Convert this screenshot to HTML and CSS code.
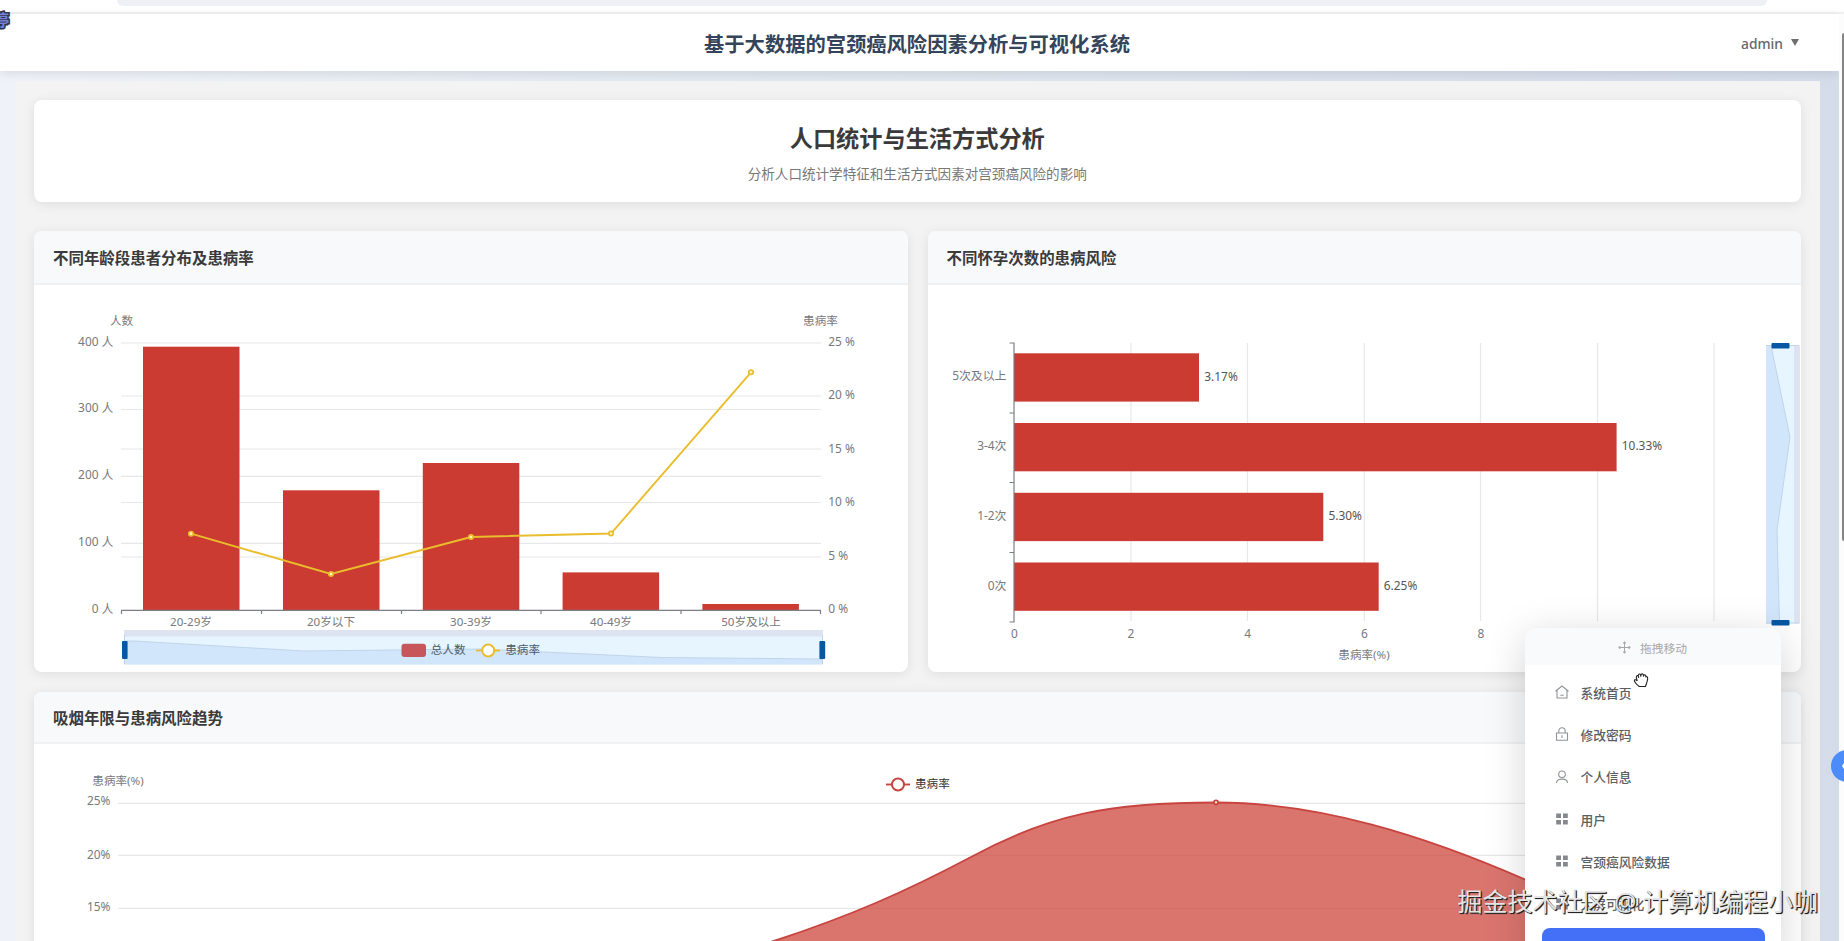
FILE: index.html
```html
<!DOCTYPE html>
<html lang="zh-CN">

<head>
    <meta charset="UTF-8">
    <meta name="viewport" content="width=device-width, initial-scale=1.0">
    <title>基于大数据的宫颈癌风险因素分析与可视化系统</title>
    <link rel="stylesheet" href="styles.css">
</head>

<body>
    <div class="browser-bar">
        <div class="address"></div>
    </div>

    <header class="header">
        <h1>基于大数据的宫颈癌风险因素分析与可视化系统</h1>
        <div class="user">admin <span class="caret"></span></div>
    </header>

    <main class="main">
        <div class="content">
            <section class="card intro">
                <h2>人口统计与生活方式分析</h2>
                <p>分析人口统计学特征和生活方式因素对宫颈癌风险的影响</p>
            </section>

            <div class="row">
                <!-- Age distribution -->
                <section class="card">
                    <div class="card-title">不同年龄段患者分布及患病率</div>
                    <svg class="chart" width="874" height="387" viewBox="34 285 874 387">
                        <g class="grid">
                            <path d="M121 343H821M121 396H821M121 409.5H821M121 449H821M121 476.300H821M121 502.500H821M121 543.400H821M121 557H821" />
                        </g>
                        <g class="bar">
                            <rect x="143" y="346.7" width="96.5" height="263.3" />
                            <rect x="283" y="490.3" width="96.5" height="119.7" />
                            <rect x="422.8" y="463" width="96.5" height="147" />
                            <rect x="562.6" y="572.4" width="96.5" height="37.6" />
                            <rect x="702.4" y="604" width="96.5" height="6" />
                        </g>
                        <path class="axis" d="M121.500 614V610.300H820.500V614M261.500 610V614M401.500 610V614M541 610V614M681 610V614" />
                        <polyline class="line yellow" points="191,533.7 331,574 471,537 611,533.5 751,372.3" />
                        <g class="dot yellow">
                            <circle cx="191" cy="533.7" r="2.2" />
                            <circle cx="331" cy="574" r="2.2" />
                            <circle cx="471" cy="537" r="2.2" />
                            <circle cx="611" cy="533.5" r="2.2" />
                            <circle cx="751" cy="372.3" r="2.2" />
                        </g>
                        <g class="label num end">
                            <text x="113.5" y="345.5">400 人</text>
                            <text x="113.5" y="412.2">300 人</text>
                            <text x="113.5" y="479">200 人</text>
                            <text x="113.5" y="545.7">100 人</text>
                            <text x="113.5" y="612.7">0 人</text>
                        </g>
                        <g class="label num">
                            <text x="828.3" y="345.7">25 %</text>
                            <text x="828.3" y="398.9">20 %</text>
                            <text x="828.3" y="453">15 %</text>
                            <text x="828.3" y="506">10 %</text>
                            <text x="828.3" y="559.5">5 %</text>
                            <text x="828.3" y="612.6">0 %</text>
                        </g>
                        <g class="label middle">
                            <text x="121.5" y="325">人数</text>
                            <text x="820.5" y="325">患病率</text>
                            <text x="191" y="626">20-29岁</text>
                            <text x="331" y="626">20岁以下</text>
                            <text x="471" y="626">30-39岁</text>
                            <text x="611" y="626">40-49岁</text>
                            <text x="751" y="626">50岁及以上</text>
                        </g>

                        <!-- data zoom -->
                        <rect class="zoom-move" x="124" y="630" width="699" height="7" />
                        <rect class="zoom-bg" x="124" y="636.5" width="699" height="28" />
                        <path class="zoom-area" d="M124 664.5V641H134L304 651L480 649L662 657.5L823 659V664.5Z" />
                        <path class="zoom-line" d="M124.5 641H134L304 651L480 649L662 657.5L823 659" />
                        <path class="zoom-edge" d="M124.5 635V664M822.5 635V664" />
                        <rect class="handle" x="122" y="641" width="5.6" height="18" rx="1" />
                        <rect class="handle" x="819.4" y="641" width="5.8" height="18" rx="1" />

                        <rect class="legend-bar" x="401.5" y="643.7" width="24.5" height="13.4" rx="3" />
                        <text class="legend soft" x="430.7" y="654">总人数</text>
                        <path class="line yellow" d="M476 650.5H500" />
                        <circle class="ring yellow" cx="488.2" cy="650.5" r="6" />
                        <text class="legend soft" x="505.2" y="654">患病率</text>
                    </svg>
                </section>

                <!-- Pregnancy count -->
                <section class="card">
                    <div class="card-title">不同怀孕次数的患病风险</div>
                    <svg class="chart" width="873" height="387" viewBox="928 285 873 387">
                        <g class="grid">
                            <path d="M1131 343V621M1247.5 343V621M1364.3 343V621M1480.5 343V621M1597.5 343V621M1714 343V621" />
                        </g>
                        <g class="bar">
                            <rect x="1014" y="353.3" width="185" height="48.3" />
                            <rect x="1014" y="423" width="602.6" height="48.3" />
                            <rect x="1014" y="492.8" width="309.3" height="48.3" />
                            <rect x="1014" y="562.5" width="364.7" height="48.3" />
                        </g>
                        <path class="axis" d="M1009.5 343H1014V622H1009.5M1009.5 413H1014M1009.5 482.5H1014M1009.5 552.5H1014" />
                        <g class="label num end">
                            <text x="1006.5" y="380">5次及以上</text>
                            <text x="1006.5" y="450">3-4次</text>
                            <text x="1006.5" y="519.7">1-2次</text>
                            <text x="1006.5" y="589.5">0次</text>
                        </g>
                        <g class="legend num">
                            <text x="1204.3" y="380.5">3.17%</text>
                            <text x="1621.8" y="450.2">10.33%</text>
                            <text x="1328.4" y="520">5.30%</text>
                            <text x="1383.8" y="589.7">6.25%</text>
                        </g>
                        <g class="label num middle">
                            <text x="1014.3" y="638">0</text>
                            <text x="1131" y="638">2</text>
                            <text x="1247.7" y="638">4</text>
                            <text x="1364.3" y="638">6</text>
                            <text x="1480.8" y="638">8</text>
                        </g>
                        <text class="label middle" x="1364" y="659">患病率(%)</text>

                        <!-- data zoom -->
                        <rect class="zoom-move" x="1794" y="345.5" width="6" height="278" />
                        <rect class="zoom-bg" x="1766" y="345.5" width="28" height="278" />
                        <path class="zoom-area" d="M1766 345.5H1771L1790 437L1777 530L1779.5 623.5H1766Z" />
                        <path class="zoom-line" d="M1771 345.5L1790 437L1777 530L1779.5 623.5" />
                        <path class="zoom-edge" d="M1766 345.5H1799M1766 623H1799" />
                        <rect class="handle" x="1771.5" y="343" width="18" height="5.6" rx="1" />
                        <rect class="handle" x="1771.5" y="620" width="18" height="5.6" rx="1" />
                    </svg>
                </section>
            </div>

            <!-- Smoking years -->
            <section class="card">
                <div class="card-title last">吸烟年限与患病风险趋势</div>
                <svg class="chart" width="1766" height="300" viewBox="34 744 1766 300">
                    <g class="grid">
                        <path d="M118 803.4H1760M118 855.3H1760M118 908.4H1760" />
                    </g>
                    <path class="area" d="M774 941C850 916 905 892 971 857C1050 814 1110 802.5 1216 802.5C1320 802.5 1425 836 1524 879L1640 941V1044H560V990Z" />
                    <path class="line red" d="M640 978Q710 962 774 941C850 916 905 892 971 857C1050 814 1110 802.5 1216 802.5C1320 802.5 1425 836 1524 879L1640 941" />
                    <circle class="dot red" cx="1216" cy="802.4" r="2" />
                    <g class="label num end">
                        <text x="110.5" y="805.3">25%</text>
                        <text x="110.5" y="858.5">20%</text>
                        <text x="110.5" y="911">15%</text>
                    </g>
                    <text class="label middle" x="118" y="785">患病率(%)</text>
                    <path class="line red" d="M886 784.5H910" />
                    <circle class="ring red" cx="898" cy="784.5" r="6" />
                    <text class="legend dark" x="915" y="788.3">患病率</text>
                </svg>
            </section>
        </div>
    </main>

    <!-- Page scrollbar -->
    <div class="scrollbar"><div class="thumb"></div></div>

    <!-- Edge overlays -->
    <div class="badge">停</div>
    <div class="float-btn">
        <svg width="32" height="32" viewBox="0 0 32 32"><path d="M16 11L12.500 16L16 21" /></svg>
    </div>

    <!-- Draggable menu -->
    <nav class="menu">
        <div class="drag">
            <svg width="13" height="13" viewBox="0 0 14 14">
                <path d="M7 1V13M1 7H13M5.500 2.500L7 1L8.500 2.500M5.500 11.500L7 13L8.500 11.500M2.500 5.500L1 7L2.500 8.500M11.500 5.500L13 7L11.500 8.500" />
            </svg>
            <span>拖拽移动</span>
        </div>
        <ul>
            <li>
                <svg class="icon" viewBox="0 0 14 14"><path d="M2 5.300V13H12V5.300M.5 6.300L7 1L13.500 6.300M5.300 10.200H8.700" /></svg>
                系统首页
            </li>
            <li>
                <svg class="icon" viewBox="0 0 14 14"><path d="M1.500 6H12.500V13.300H1.500ZM3.800 6V4A3.200 3.200 0 0 1 10.200 4V6M7 8.300V11" /></svg>
                修改密码
            </li>
            <li>
                <svg class="icon" viewBox="0 0 14 14"><circle cx="7" cy="4.300" r="3.300" /><path d="M1.500 13C1.500 7.800 12.500 7.800 12.500 13" /></svg>
                个人信息
            </li>
            <li>
                <svg class="icon solid" viewBox="0 0 14 14"><path d="M1.200 1.500H6V6H1.200ZM8 1.500H12.800V6H8ZM1.200 8H6V12.500H1.200ZM8 8H12.800V12.500H8Z" /></svg>
                用户
            </li>
            <li>
                <svg class="icon solid" viewBox="0 0 14 14"><path d="M1.200 1.500H6V6H1.200ZM8 1.500H12.800V6H8ZM1.200 8H6V12.500H1.200ZM8 8H12.800V12.500H8Z" /></svg>
                宫颈癌风险数据
            </li>
            <li>
                <svg class="icon solid" viewBox="0 0 14 14"><path d="M1.200 1.500H6V6H1.200ZM8 1.500H12.800V6H8ZM1.200 8H6V12.500H1.200ZM8 8H12.800V12.500H8Z" /></svg>
                大屏可视化
            </li>
        </ul>
        <div class="menu-btn"></div>
    </nav>

    <svg class="cursor" width="16" height="16" viewBox="0 0 16 16">
        <path d="M4.200 9L3.300 5.500C3.100 3.500 4.700 3 5.300 4.200C5 1.700 7.200 1.400 7.800 3.200C8.300 1.200 10.300 1.500 10.500 3.500C11.500 2.200 13 3 12.900 4.700C14.400 4.300 14.900 5.800 14.600 7.200C14.300 10 13.300 11.500 12.500 14.500H6.200C4.500 13.200 2.600 11.500 1.600 9.500C.8 7.700 2.400 7 4.200 9Z" />
        <path d="M5.300 4.200L5.700 6M7.800 3.200V4.500M10.500 3.500V4.500" />
    </svg>

    <div class="watermark">掘金技术社区 @ 计算机编程小咖</div>
</body>

</html>
```
FILE: styles.css
```css
* {
    box-sizing: border-box;
}

body {
    margin: 0;
    height: 941px;
    overflow: hidden;
    position: relative;
    display: flex;
    flex-direction: column;
    font-family: "Noto Sans", "Noto Sans CJK SC", sans-serif;
    background: #fff;
    color: #333;
}

h1, h2, p, ul {
    margin: 0;
    padding: 0;
}

.browser-bar {
    flex: none;
    height: 14px;
    padding: 0 77px 0 117px;
    border-bottom: 2px solid #f1f2f4;
}

.address {
    height: 6px;
    background: #eff0f5;
    border-radius: 0 0 6px 6px;
}

.header {
    flex: none;
    position: relative;
    z-index: 1;
    height: 57px;
    margin-right: 5px;
    padding: 2px 40px 0 35px;
    display: grid;
    grid-template-columns: 1fr auto 1fr;
    align-items: center;
    background: #fff;
    box-shadow: 0 2px 10px rgba(0, 0, 0, 0.1);
}

.header h1 {
    grid-column: 2;
    font-size: 20.3px;
    line-height: 30px;
    font-weight: 700;
    color: #34445a;
}

.user {
    justify-self: end;
    display: flex;
    align-items: center;
    gap: 8px;
    font-size: 13.8px;
    font-weight: 500;
    color: #65676b;
}

.caret {
    margin-top: -2px;
    border: 4.5px solid transparent;
    border-top: 7px solid #6d6f73;
    border-bottom: 0;
}

.main {
    flex: none;
    height: 870px;
    margin-right: 5px;
    padding: 10px 19px 0 16px;
    overflow: hidden;
    background: linear-gradient(90deg, #eff3f9, #e3e9f0 35%, #d4dcea);
}

.content {
    height: 1000px;
    padding: 19px 19.5px 0 18px;
    background: #f3f3f3;
}

.card {
    background: #fff;
    border-radius: 8px;
    overflow: hidden;
    box-shadow: 0 2px 12px rgba(0, 0, 0, 0.09);
}

.intro {
    height: 102px;
    padding-top: 21px;
    text-align: center;
}

.intro h2 {
    font-size: 23.2px;
    line-height: 34px;
    font-weight: 600;
    color: #3a3a3a;
}

.intro p {
    margin-top: 9px;
    font-size: 13.57px;
    line-height: 20px;
    color: #777;
}

.row {
    display: grid;
    grid-template-columns: 874px 1fr;
    gap: 19.5px;
    margin: 29px 0 20px;
}

.card-title {
    height: 54px;
    padding: 0 20px 0 19px;
    border-bottom: 2px solid #eff1f3;
    background: #f8f9fb;
    font-size: 15.45px;
    line-height: 54px;
    font-weight: 700;
    color: #3a3a3a;
}

.card-title.last {
    height: 52px;
    line-height: 53px;
}

.chart {
    display: block;
}

.grid path {
    stroke: #e6e8ea;
    stroke-width: 1.2;
    fill: none;
}

.bar rect {
    fill: #cc3b31;
}

.axis {
    stroke: #7b7e84;
    stroke-width: 1.2;
    fill: none;
}

.line {
    stroke-width: 1.9;
    fill: none;
}

.line.yellow,
.dot.yellow,
.ring.yellow {
    stroke: #e9bd2c;
}

.line.red,
.dot.red,
.ring.red {
    stroke: #c8453f;
}

.dot {
    fill: #fff3c9;
    stroke-width: 1.7;
}

.ring {
    fill: #fff;
    stroke-width: 2;
}

.area {
    fill: #cb3a30;
    fill-opacity: 0.7;
}

.label {
    font-size: 11.6px;
    fill: #777a7e;
}

.legend {
    font-size: 11.6px;
    fill: #555;
}

.num {
    font-size: 11.9px;
}

.legend.soft {
    fill: #4d5b66;
}

.legend.dark {
    fill: #333;
}

.end {
    text-anchor: end;
}

.middle {
    text-anchor: middle;
}

.zoom-move {
    fill: #dde3f0;
}

.zoom-bg {
    fill: #e6f5ff;
}

.zoom-area {
    fill: #d2e6fb;
}

.zoom-line,
.zoom-edge {
    fill: none;
    stroke: #b9cde6;
    stroke-width: 0.8;
}

.handle {
    fill: #0757a4;
}

.legend-bar {
    fill: #c6565a;
}

.scrollbar {
    position: absolute;
    z-index: 1;
    top: 14px;
    right: 0;
    width: 5px;
    height: 927px;
    padding: 19px 0 0 3px;
    background: #fcfcfc;
}

.thumb {
    height: 508px;
    background: #858585;
    border-radius: 2px 0 0 2px;
}

.badge {
    position: absolute;
    z-index: 2;
    left: -7px;
    top: 9px;
    font-size: 16px;
    line-height: 22px;
    font-weight: 700;
    color: #7580d8;
    -webkit-text-stroke: 3px #303247;
    paint-order: stroke fill;
}

.float-btn {
    position: absolute;
    z-index: 3;
    left: 1831px;
    top: 750px;
    width: 32px;
    height: 32px;
    border-radius: 50%;
    background: #4b8bfa;
}

.float-btn path {
    fill: none;
    stroke: #fff;
    stroke-width: 2.5;
}

.menu {
    position: absolute;
    z-index: 2;
    left: 1524.5px;
    top: 628px;
    width: 256px;
    height: 340px;
    overflow: hidden;
    background: #fff;
    border-radius: 12px;
    box-shadow: 0 8px 40px rgba(0, 0, 0, 0.17);
}

.drag {
    height: 37px;
    padding-top: 1px;
    display: flex;
    align-items: center;
    justify-content: center;
    gap: 9px;
    background: #f9fafb;
    font-size: 11.8px;
    color: #a8a8aa;
}

.drag path {
    fill: none;
    stroke: #a8a8aa;
    stroke-width: 1.1;
}

.menu ul {
    list-style: none;
    padding: 6px 0 1px 30px;
}

.menu li {
    height: 42.3px;
    display: flex;
    align-items: center;
    gap: 12px;
    font-size: 12.75px;
    font-weight: 500;
    color: #5b5e62;
}

.icon {
    width: 14px;
    height: 14px;
    fill: none;
    stroke: #909399;
    stroke-width: 1.1;
}

.icon.solid {
    fill: #85888e;
    stroke: none;
}

.menu-btn {
    height: 44px;
    margin: 2px 16px 0 17px;
    border-radius: 8px;
    background: #4470f8;
}

.cursor {
    position: absolute;
    z-index: 3;
    left: 1633px;
    top: 672px;
    fill: #fff;
    stroke: #222;
    stroke-width: 1.1;
}

.watermark {
    position: absolute;
    z-index: 4;
    left: 1457.5px;
    top: 883px;
    font-size: 25px;
    line-height: 36px;
    white-space: nowrap;
    color: #e4e4e4;
    text-shadow: 1px 1px 1px #222, 1px 1px 0 #333;
}
```
